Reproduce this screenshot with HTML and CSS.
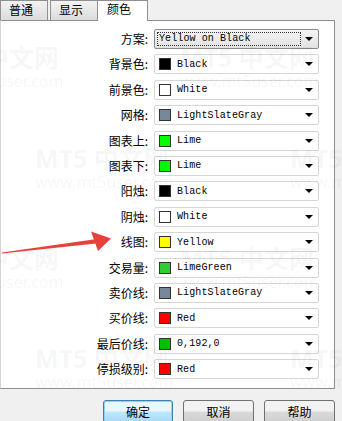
FILE: index.html
```html
<!DOCTYPE html>
<html lang="zh">
  <head>
    <meta charset="UTF-8" />
    <title>颜色</title>
    <link rel="stylesheet" href="styles.css">
  </head>
  <body>
    <div id="dialog">
      <div class="tabs">
        <div class="tab">普通</div>
        <div class="tab">显示</div>
        <div class="tab active">颜色</div>
      </div>

      <div class="panel">
        <div class="row">
          <div class="label">方案:</div>
          <div class="combo scheme">
            <div class="focus">Yellow on Black</div>
            <span class="drop"></span>
          </div>
        </div>
        <div class="row">
          <div class="label">背景色:</div>
          <div class="combo"><i class="swatch" style="background:#000000"></i>Black<span class="drop"></span></div>
        </div>
        <div class="row">
          <div class="label">前景色:</div>
          <div class="combo"><i class="swatch" style="background:#ffffff"></i>White<span class="drop"></span></div>
        </div>
        <div class="row">
          <div class="label">网格:</div>
          <div class="combo"><i class="swatch" style="background:#778899"></i>LightSlateGray<span class="drop"></span></div>
        </div>
        <div class="row">
          <div class="label">图表上:</div>
          <div class="combo"><i class="swatch" style="background:#00ff00"></i>Lime<span class="drop"></span></div>
        </div>
        <div class="row">
          <div class="label">图表下:</div>
          <div class="combo"><i class="swatch" style="background:#00ff00"></i>Lime<span class="drop"></span></div>
        </div>
        <div class="row">
          <div class="label">阳烛:</div>
          <div class="combo"><i class="swatch" style="background:#000000"></i>Black<span class="drop"></span></div>
        </div>
        <div class="row">
          <div class="label">阴烛:</div>
          <div class="combo"><i class="swatch" style="background:#ffffff"></i>White<span class="drop"></span></div>
        </div>
        <div class="row">
          <div class="label">线图:</div>
          <div class="combo"><i class="swatch" style="background:#ffff00"></i>Yellow<span class="drop"></span></div>
        </div>
        <div class="row">
          <div class="label">交易量:</div>
          <div class="combo"><i class="swatch" style="background:#32cd32"></i>LimeGreen<span class="drop"></span></div>
        </div>
        <div class="row">
          <div class="label">卖价线:</div>
          <div class="combo"><i class="swatch" style="background:#778899"></i>LightSlateGray<span class="drop"></span></div>
        </div>
        <div class="row">
          <div class="label">买价线:</div>
          <div class="combo"><i class="swatch" style="background:#ff0000"></i>Red<span class="drop"></span></div>
        </div>
        <div class="row">
          <div class="label">最后价线:</div>
          <div class="combo"><i class="swatch" style="background:#00c000"></i>0,192,0<span class="drop"></span></div>
        </div>
        <div class="row">
          <div class="label">停损级别:</div>
          <div class="combo"><i class="swatch" style="background:#ff0000"></i>Red<span class="drop"></span></div>
        </div>
      </div>

      <div class="buttons">
        <button class="btn default">确定</button>
        <button class="btn">取消</button>
        <button class="btn">帮助</button>
      </div>

      <!-- watermark stamps -->
      <div class="stamp" style="left:-75px;top:42px"><b>MT5 中文网</b><span>www.mt5user.com</span></div>
      <div class="stamp" style="left:180px;top:42px"><b>MT5 中文网</b><span>www.mt5user.com</span></div>
      <div class="stamp" style="left:35px;top:143px"><b>MT5 中文网</b><span>www.mt5user.com</span></div>
      <div class="stamp" style="left:290px;top:143px"><b>MT5 中文网</b><span>www.mt5user.com</span></div>
      <div class="stamp" style="left:-75px;top:243px"><b>MT5 中文网</b><span>www.mt5user.com</span></div>
      <div class="stamp" style="left:180px;top:243px"><b>MT5 中文网</b><span>www.mt5user.com</span></div>
      <div class="stamp" style="left:35px;top:343px"><b>MT5 中文网</b><span>www.mt5user.com</span></div>
      <div class="stamp" style="left:290px;top:343px"><b>MT5 中文网</b><span>www.mt5user.com</span></div>

      <svg class="arrow" width="120" height="30" viewBox="0 228 120 30">
        <polygon points="2,252.5 95,239.3 96,243.6 2,253.6" fill="#e8413c" />
        <polygon points="91,231.5 111,238.5 98,251" fill="#e8413c" />
      </svg>
    </div>
  </body>
</html>
```

FILE: styles.css
```css
body {
  margin: 0;
  background-color: #f0f0f0;
  font-family: "Noto Sans CJK SC", "Noto Sans", sans-serif;
  font-size: 12px;
  color: #000;
}
#dialog {
  position: relative;
  width: 342px;
  height: 421px;
  overflow: hidden;
}

.tabs {
  display: flex;
  height: 20px;
  align-items: flex-end;
}
.tab {
  box-sizing: border-box;
  width: 48px;
  height: 20px;
  margin-right: 2px;
  padding-left: 8px;
  line-height: 18px;
  border: 1px solid #8e8f8f;
  border-bottom: none;
  background: linear-gradient(#f3f3f3, #dcdcdc);
}
.tab.active {
  width: 51px;
  height: 21px;
  margin: 0 0 -1px -3px;
  padding-left: 9px;
  line-height: 16px;
  background: #fff;
  position: relative;
  z-index: 1;
}

.panel {
  box-sizing: border-box;
  width: 335px;
  height: 369px;
  padding-top: 8px;
  background: #fff;
  border: 1px solid #8e8f8f;
  border-left-color: #d4d4d4;
}
.row {
  display: flex;
  align-items: center;
  height: 20px;
  margin-bottom: 5.4px;
}
.label {
  width: 147px;
  text-align: right;
  line-height: 20px;
  white-space: nowrap;
}

.combo {
  position: relative;
  box-sizing: border-box;
  display: flex;
  align-items: center;
  width: 165px;
  height: 20px;
  margin-left: 6px;
  padding-left: 2px;
  border: 1px solid #d6d6d6;
  border-radius: 2px;
  font-family: "Liberation Mono", "DejaVu Sans Mono", monospace;
  font-size: 10px;
  letter-spacing: 0.1px;
}
.combo.scheme {
  border-color: #8a8a8a;
  background: linear-gradient(#f4f4f4, #e2e2e2);
}
.combo .focus {
  box-sizing: border-box;
  width: 144px;
  height: 14px;
  padding-left: 1px;
  line-height: 12px;
  border: 1px dotted #333;
}
.swatch {
  box-sizing: border-box;
  width: 12px;
  height: 12px;
  margin: 0 6px 0 2px;
  border: 1px solid #333;
}
.drop {
  position: absolute;
  right: 5px;
  top: 7px;
  width: 0;
  height: 0;
  border-left: 4px solid transparent;
  border-right: 4px solid transparent;
  border-top: 4px solid #000;
}

.buttons {
  display: flex;
  gap: 10px;
  padding: 11px 0 0 103px;
}
.btn {
  width: 71px;
  height: 23px;
  padding: 0;
  border: 1px solid #707070;
  border-radius: 3px;
  background: linear-gradient(#f2f2f2 45%, #d9d9d9 55%, #cfcfcf);
  font-family: "Noto Sans CJK SC", sans-serif;
  font-size: 12px;
  color: #000;
}
.btn.default {
  width: 70px;
  border-color: #3c7fb1;
  box-shadow: inset 0 0 0 1px #8fd3f7;
  background: linear-gradient(#eaf6fd 45%, #bee6fd 55%, #a7d9f5);
}

.stamp {
  position: absolute;
  display: flex;
  flex-direction: column;
  width: 160px;
  color: rgba(0, 0, 0, 0.05);
  pointer-events: none;
  white-space: nowrap;
}
.stamp b {
  font-family: "Noto Sans", "Noto Sans CJK SC", sans-serif;
  font-size: 25px;
  line-height: 30px;
}
.stamp span {
  font-family: "Noto Sans", sans-serif;
  font-size: 16px;
  line-height: 18px;
}
.arrow {
  position: absolute;
  left: 0;
  top: 228px;
}
```
